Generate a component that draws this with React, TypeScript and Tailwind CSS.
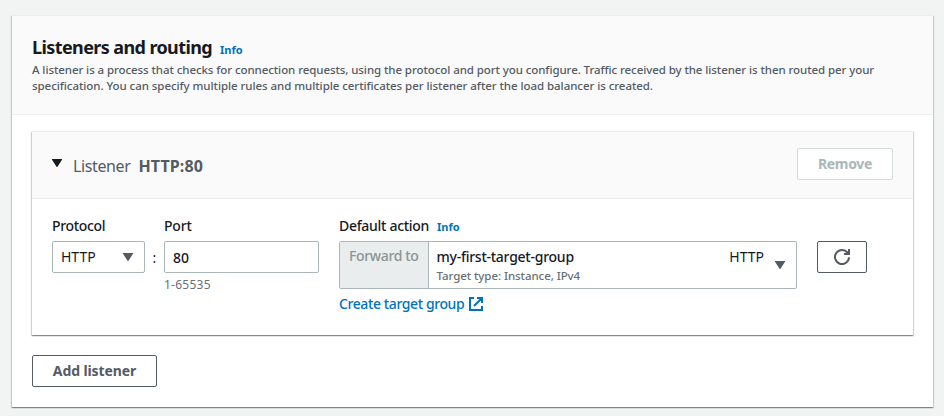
import type { ReactNode } from "react";

function Caret({ className }: { className: string }) {
  return (
    <svg viewBox="0 0 10 8" className={`h-2 w-2.5 shrink-0 ${className}`} fill="currentColor">
      <path d="M0 0H10V.8L5.3 8H4.7L0 .8Z" />
    </svg>
  );
}

function InfoLink({ className }: { className: string }) {
  return (
    <a className={`text-[11px] leading-4 font-bold text-[#0073bb] ${className}`}>Info</a>
  );
}

function Panel({ className, children }: { className: string; children: ReactNode }) {
  return (
    <section
      className={`border-t border-[#eaeded] bg-white shadow-[0_1px_1px_0_rgba(0,28,36,0.3),1px_1px_1px_0_rgba(0,28,36,0.15),-1px_1px_1px_0_rgba(0,28,36,0.15)] ${className}`}
    >
      {children}
    </section>
  );
}

export default function App() {
  return (
    <main className="h-[416px] w-[944px] overflow-hidden bg-[#f2f3f3] pt-[15px] pl-3 font-['Noto_Sans','Open_Sans',sans-serif] text-[#16191f]">
      <Panel className="h-[392px] w-[921px]">
        <header className="h-[99px] border-b border-[#eaeded] bg-[#fafafa] px-5 pt-[19px]">
          <div className="flex h-[27px] items-baseline whitespace-nowrap">
            <h1 className="text-[18px] leading-[24px] font-bold tracking-[-0.6px]">Listeners and routing</h1>
            <InfoLink className="ml-2" />
          </div>
          <p className="text-[11.5px] leading-4 font-medium tracking-[-0.06px] whitespace-nowrap text-[#545b64]">
            <span className="tracking-[-0.08px]">
              A listener is a process that checks for connection requests, using the protocol and port you configure. Traffic received by the listener is then routed per your
            </span>
            <br />
            specification. You can specify multiple rules and multiple certificates per listener after the load balancer is created.
          </p>
        </header>

        <div className="px-5 pt-4">
          <Panel className="h-[204px] w-[881px]">
            <div className="flex h-[67px] items-center justify-between border-b border-[#eaeded] bg-[#fafafa] px-5">
              <div className="flex items-center pt-[2px] whitespace-nowrap text-[#545b64]">
                <Caret className="mb-1.5 text-[#16191f]" />
                <span className="ml-[11px] text-[16px] leading-6 tracking-[-0.38px]">Listener</span>
                <span className="ml-2 text-[16px] leading-6 font-bold tracking-[0.1px]">HTTP:80</span>
              </div>
              <button className="mb-[2px] h-8 w-24 rounded-[2px] border border-[#d5dbdb] bg-white text-[14px] leading-5 font-bold tracking-[-0.3px] text-[#aab7b8]">
                Remove
              </button>
            </div>

            <div className="flex items-start px-5 pt-[17px] text-[14px] leading-5 whitespace-nowrap">
              <div className="w-[93px]">
                <label className="block h-[25px] font-medium tracking-[-0.35px]">Protocol</label>
                <div className="flex h-8 items-center justify-between rounded-[2px] border border-[#aab7b8] pr-[11px] pl-2">
                  <span>HTTP</span>
                  <Caret className="text-[#545b64]" />
                </div>
              </div>
              <span className="w-[19px] pt-[32px] text-center">:</span>
              <div className="w-[155px]">
                <label className="block h-[25px] font-medium tracking-[-0.2px]">Port</label>
                <div className="flex h-8 items-center rounded-[2px] border border-[#aab7b8] pt-[2px] pl-2 font-medium">80</div>
                <p className="pt-1 text-[12px] leading-4 tracking-[0.25px] text-[#687078]">1-65535</p>
              </div>
              <div className="ml-5 w-[458px]">
                <div className="flex h-[25px] items-baseline">
                  <label className="font-medium tracking-[-0.3px]">Default action</label>
                  <InfoLink className="ml-2" />
                </div>
                <div className="flex h-12 rounded-[2px] border border-[#aab7b8]">
                  <span className="w-[89px] border-r border-[#aab7b8] bg-[#eaeded] pt-1 pl-[9px] font-medium tracking-[-0.35px] text-[#879596]">
                    Forward to
                  </span>
                  <div className="flex-1 pt-[5px] pl-[7.5px]">
                    <div className="leading-5 font-medium tracking-[-0.25px]">my-first-target-group</div>
                    <div className="pt-px text-[11.5px] leading-4 font-medium tracking-[-0.07px] text-[#687078]">Target type: Instance, IPv4</div>
                  </div>
                  <span className="pt-[5px]">HTTP</span>
                  <Caret className="mt-[19px] mr-[11px] ml-[11px] text-[#545b64]" />
                </div>
                <a className="mt-[5px] flex items-center text-[#0073bb]">
                  <span className="font-medium tracking-[-0.4px]">Create target group</span>
                  <svg viewBox="0 0 14 14" className="ml-[5px] size-3.5" fill="none" stroke="currentColor" strokeWidth="2">
                    <path d="M5 1H1V13H13V9M8 1H13V6M13 1L5 9" />
                  </svg>
                </a>
              </div>
              <button className="mt-[25px] ml-5 flex h-8 w-[50px] items-center justify-center rounded-[2px] border border-[#545b64] text-[#545b64]">
                <svg viewBox="0 0 16 16" className="size-4" fill="none" stroke="currentColor" strokeWidth="2">
                  <path d="M15 8.2A7 7 0 1 1 13.5 3.7" />
                  <path d="M15 0V5H10" />
                  <path d="M12 3.5L15 2V5H11Z" fill="currentColor" stroke="none" />
                </svg>
              </button>
            </div>
          </Panel>
          <button className="mt-5 h-8 w-[125px] rounded-[2px] border border-[#545b64] bg-white text-[14px] leading-5 font-bold tracking-[-0.1px] whitespace-nowrap text-[#545b64]">
            Add listener
          </button>
        </div>
      </Panel>
    </main>
  );
}
